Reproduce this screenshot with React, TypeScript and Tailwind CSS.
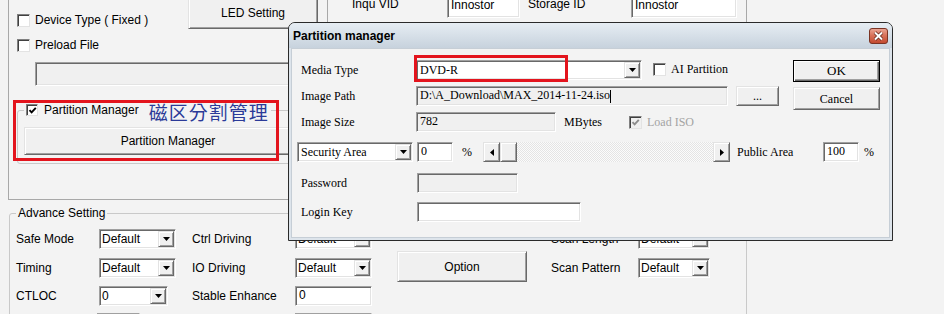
import React from 'react';

const sunken =
  'border border-t-[#a0a0a0] border-l-[#a0a0a0] border-r-white border-b-white shadow-[inset_1px_1px_0_#696969,inset_-1px_-1px_0_#e3e3e3]';
const raised =
  'bg-[#f0f0f0] border border-t-[#e3e3e3] border-l-[#e3e3e3] border-r-[#696969] border-b-[#696969] shadow-[inset_1px_1px_0_#ffffff,inset_-1px_-1px_0_#a0a0a0]';

function DownArrow() {
  return (
    <svg width="7" height="4" viewBox="0 0 7 4">
      <path d="M0 0H7L3.5 4Z" fill="#000" />
    </svg>
  );
}

function SideArrow({ dir }: { dir: 'left' | 'right' }) {
  return (
    <svg width="4" height="7" viewBox="0 0 4 7">
      <path d={dir === 'left' ? 'M4 0V7L0 3.5Z' : 'M0 0V7L4 3.5Z'} fill="#000" />
    </svg>
  );
}

function Select({ width, value, serif }: { width: string; value: string; serif?: boolean }) {
  return (
    <div className={`flex h-[20px] p-[1px] bg-white ${sunken} ${width}`}>
      <span className={`flex-1 leading-[17px] overflow-hidden whitespace-nowrap ${serif ? 'pl-[2px]' : 'pl-[1px]'}`}>
        {value}
      </span>
      <span className={`w-[16px] h-[16px] flex items-center justify-center ${raised}`}>
        <DownArrow />
      </span>
    </div>
  );
}

function Field({ width, value, gray, children }: { width: string; value?: string; gray?: boolean; children?: React.ReactNode }) {
  return (
    <div
      className={`h-[20px] px-[3px] leading-[17px] whitespace-nowrap overflow-hidden ${gray ? 'bg-[#f0f0f0]' : 'bg-white'} ${sunken} ${width}`}
    >
      {value}
      {children}
    </div>
  );
}

function Btn({ className, children }: { className: string; children?: React.ReactNode }) {
  return <div className={`flex items-center justify-center ${raised} ${className}`}>{children}</div>;
}

function Check({ checked, disabled, small }: { checked?: boolean; disabled?: boolean; small?: boolean }) {
  return (
    <span
      className={`inline-flex shrink-0 items-center justify-center align-middle border border-t-[#808080] border-l-[#808080] border-r-[#e3e3e3] border-b-[#e3e3e3] shadow-[inset_1px_1px_0_#404040] ${
        small ? 'w-[12px] h-[12px]' : 'w-[13px] h-[13px]'
      } ${disabled ? 'bg-[#f0f0f0]' : 'bg-white'}`}
    >
      {checked && (
        <svg width="9" height="9" viewBox="0 0 9 9">
          <path d="M1.5 4.2L3.6 6.4L7.8 1.8" fill="none" stroke={disabled ? '#8d8d8d' : '#000'} strokeWidth="1.9" />
        </svg>
      )}
    </span>
  );
}

function Label({ children }: { children: React.ReactNode }) {
  return <div className="h-[20px] flex items-center whitespace-nowrap">{children}</div>;
}

function CloseButton() {
  return (
    <svg width="19" height="16" viewBox="0 0 19 16">
      <defs>
        <linearGradient id="closeGrad" x1="0" y1="0" x2="0" y2="1">
          <stop offset="0" stopColor="#eba897" />
          <stop offset="0.45" stopColor="#d9735b" />
          <stop offset="1" stopColor="#c2472c" />
        </linearGradient>
      </defs>
      <rect x="0.5" y="0.5" width="18" height="15" rx="2.5" fill="url(#closeGrad)" stroke="#7a3424" />
      <path d="M6 4.5L13 11.5M13 4.5L6 11.5" stroke="#5a2014" strokeWidth="3.4" />
      <path d="M6 4.5L13 11.5M13 4.5L6 11.5" stroke="#ffffff" strokeWidth="2" />
    </svg>
  );
}

function PartitionDialog() {
  return (
    <div className="absolute left-[288px] top-[22px] w-[605px] h-[219px] flex flex-col rounded-t-[7px] border border-[#2a2a2a] bg-[#dde4eb]">
      <div className="h-[25px] flex items-center pl-[4px] pr-[4px] rounded-t-[6px] bg-gradient-to-b from-[#e6edf3] to-[#c7d2dd]">
        <span className="font-bold text-[12px]">Partition manager</span>
        <span className="ml-auto flex">
          <CloseButton />
        </span>
      </div>
      <div className="flex-1 mx-[2px] mb-[2px] bg-[#f3f3f3] border border-[#c6ced6] font-['Liberation_Serif','Times_New_Roman',serif] text-[12px] pl-[9px] pt-[11px] flex flex-col">
        <div className="flex items-start h-[22px]">
          <div className="w-[115px]">
            <Label>Media Type</Label>
          </div>
          <Select width="w-[226px]" value="DVD-R" serif />
          <span className="ml-[11px] mt-[3px] flex">
            <Check />
          </span>
          <span className="ml-[5px] h-[19px] leading-[19px]">AI Partition</span>
          <div className="ml-auto mr-[9px] w-[87px] h-[22px] flex items-center justify-center bg-[#f0f0f0] border border-black shadow-[inset_1px_1px_0_#ffffff,inset_-1px_-1px_0_#696969,inset_-2px_-2px_0_#a0a0a0]">
            <span className="text-[13px]">OK</span>
          </div>
        </div>

        <div className="mt-[4px] flex items-start h-[24px]">
          <div className="w-[115px]">
            <Label>Image Path</Label>
          </div>
          <Field width="w-[312px]" gray>
            D:\A_Download\MAX_2014-11-24.iso<span className="inline-block w-[1px] h-[13px] bg-black align-middle" />
          </Field>
          <Btn className="ml-[8px] w-[43px] h-[20px]">...</Btn>
          <Btn className="ml-auto mr-[9px] mt-[1px] w-[87px] h-[23px]">Cancel</Btn>
        </div>

        <div className="mt-[2px] flex items-center h-[20px]">
          <div className="w-[115px]">
            <Label>Image Size</Label>
          </div>
          <Field width="w-[140px]" value="782" gray />
          <span className="ml-[8px] w-[65px]">MBytes</span>
          <Check checked disabled />
          <span className="ml-[5px] text-[#a3a3a3]">Load ISO</span>
        </div>

        <div className="mt-[10px] -ml-[4px] flex items-center h-[20px]">
          <Select width="w-[116px]" value="Security Area" serif />
          <span className="ml-[4px]">
            <Field width="w-[36px]" value="0" />
          </span>
          <span className="ml-[9px] w-[21px]">%</span>
          <div className="w-[247px] h-[20px] flex">
            <Btn className="w-[17px] h-[20px]">
              <SideArrow dir="left" />
            </Btn>
            <Btn className="w-[17px] h-[20px]" />
            <div className="flex-1 bg-[repeating-conic-gradient(#e4e4e4_0_25%,#fbfbfb_0_50%)] bg-[length:2px_2px]" />
            <Btn className="w-[17px] h-[20px]">
              <SideArrow dir="right" />
            </Btn>
          </div>
          <span className="ml-[7px] w-[86px]">Public Area</span>
          <Field width="w-[36px]" value="100" />
          <span className="ml-[5px]">%</span>
        </div>

        <div className="mt-[11px] flex items-center h-[20px]">
          <div className="w-[116px]">
            <Label>Password</Label>
          </div>
          <Field width="w-[101px]" gray />
        </div>

        <div className="mt-[9px] flex items-center h-[20px]">
          <div className="w-[116px]">
            <Label>Login Key</Label>
          </div>
          <Field width="w-[164px]" />
        </div>
      </div>
    </div>
  );
}

export default function App() {
  return (
    <div className="relative w-[944px] h-[314px] overflow-hidden bg-[#f3f3f3] font-['Liberation_Sans',Arial,sans-serif] text-[12px] text-black">
      <div className="flex h-[200px]">
        <div className="ml-[8px] w-[320px] h-[200px] border-x border-b border-[#a8a8a8] flex flex-col">
          <div className="flex items-start h-[29px]">
            <div className="mt-[14px] ml-[8px] h-[13px] flex items-center gap-[5px] leading-[13px]">
              <Check />
              <span>Device Type ( Fixed )</span>
            </div>
            <Btn className="ml-auto mr-[9px] -mt-[4px] w-[130px] h-[33px]">LED Setting</Btn>
          </div>
          <div className="mt-[10px] ml-[8px] h-[13px] flex items-center gap-[5px] leading-[13px]">
            <Check />
            <span>Preload File</span>
          </div>
          <div className="mt-[10px] ml-[26px]">
            <div className={`w-[277px] h-[24px] bg-[#f0f0f0] ${sunken}`} />
          </div>
          <fieldset className="mt-[17px] ml-[8px] w-[303px] border border-[#c9c9c9] rounded-[3px] px-[6px] pb-[8px]">
            <legend className="px-[2px] h-[14px] leading-[14px] whitespace-nowrap">
              <span className="inline-flex items-center h-[14px] leading-[14px]">
                <Check checked small />
                <span className="ml-[6px]">Partition Manager</span>
                <span className="relative top-[2px] ml-[10px] h-[14px] leading-[14px] text-[19px] tracking-[1px] text-[#2b3a98] font-['Noto_Sans_CJK_TC','Noto_Sans_CJK_SC',sans-serif]">
                  磁区分割管理
                </span>
              </span>
            </legend>
            <Btn className="mt-[10px] w-[288px] h-[28px]">Partition Manager</Btn>
          </fieldset>
        </div>

        <div className="ml-[9px] w-[410px] h-[200px] border-r border-[#a8a8a8]">
          <div className="flex items-start -mt-[4px]">
            <span className="ml-[15px] w-[95px] h-[16px] leading-[16px]">Inqu VID</span>
            <Field width="w-[73px] !h-[22px]" value="Innostor" />
            <span className="ml-[8px] w-[103px] h-[16px] leading-[16px]">Storage ID</span>
            <Field width="w-[106px] !h-[22px]" value="Innostor" />
          </div>
        </div>
      </div>

      <fieldset className="ml-[9px] mt-[6px] w-[738px] h-[140px] border border-[#c9c9c9] rounded-[3px] pl-[6px]">
        <legend className="px-[2px] leading-[14px]">Advance Setting</legend>
        <div className="mt-[9px] grid grid-cols-[83px_93px_103px_102px_154px_87px_72px] grid-rows-[29px_28px_27px_20px] items-start">
          <Label>Safe Mode</Label>
          <Select width="w-[77px]" value="Default" />
          <Label>Ctrl Driving</Label>
          <Select width="w-[77px]" value="Default" />
          <div />
          <Label>Scan Length</Label>
          <Select width="w-[72px]" value="Default" />

          <Label>Timing</Label>
          <Select width="w-[77px]" value="Default" />
          <Label>IO Driving</Label>
          <Select width="w-[77px]" value="Default" />
          <Btn className="-mt-[7px] w-[130px] h-[31px]">Option</Btn>
          <Label>Scan Pattern</Label>
          <Select width="w-[72px]" value="Default" />

          <Label>CTLOC</Label>
          <Select width="w-[69px]" value="0" />
          <Label>Stable Enhance</Label>
          <Field width="w-[77px]" value="0" />
          <div />
          <div />
          <div />

          <div />
          <div className="-ml-[2px]">
            <Field width="w-[43px]" />
          </div>
          <div />
          <Field width="w-[77px]" />
        </div>
      </fieldset>

      <PartitionDialog />

      <div className="absolute left-[13px] top-[100px] w-[266px] h-[61px] border-[3px] border-[#e3141d]" />
      <div className="absolute left-[414px] top-[55px] w-[154px] h-[27px] border-[3px] border-[#e3141d]" />
    </div>
  );
}
